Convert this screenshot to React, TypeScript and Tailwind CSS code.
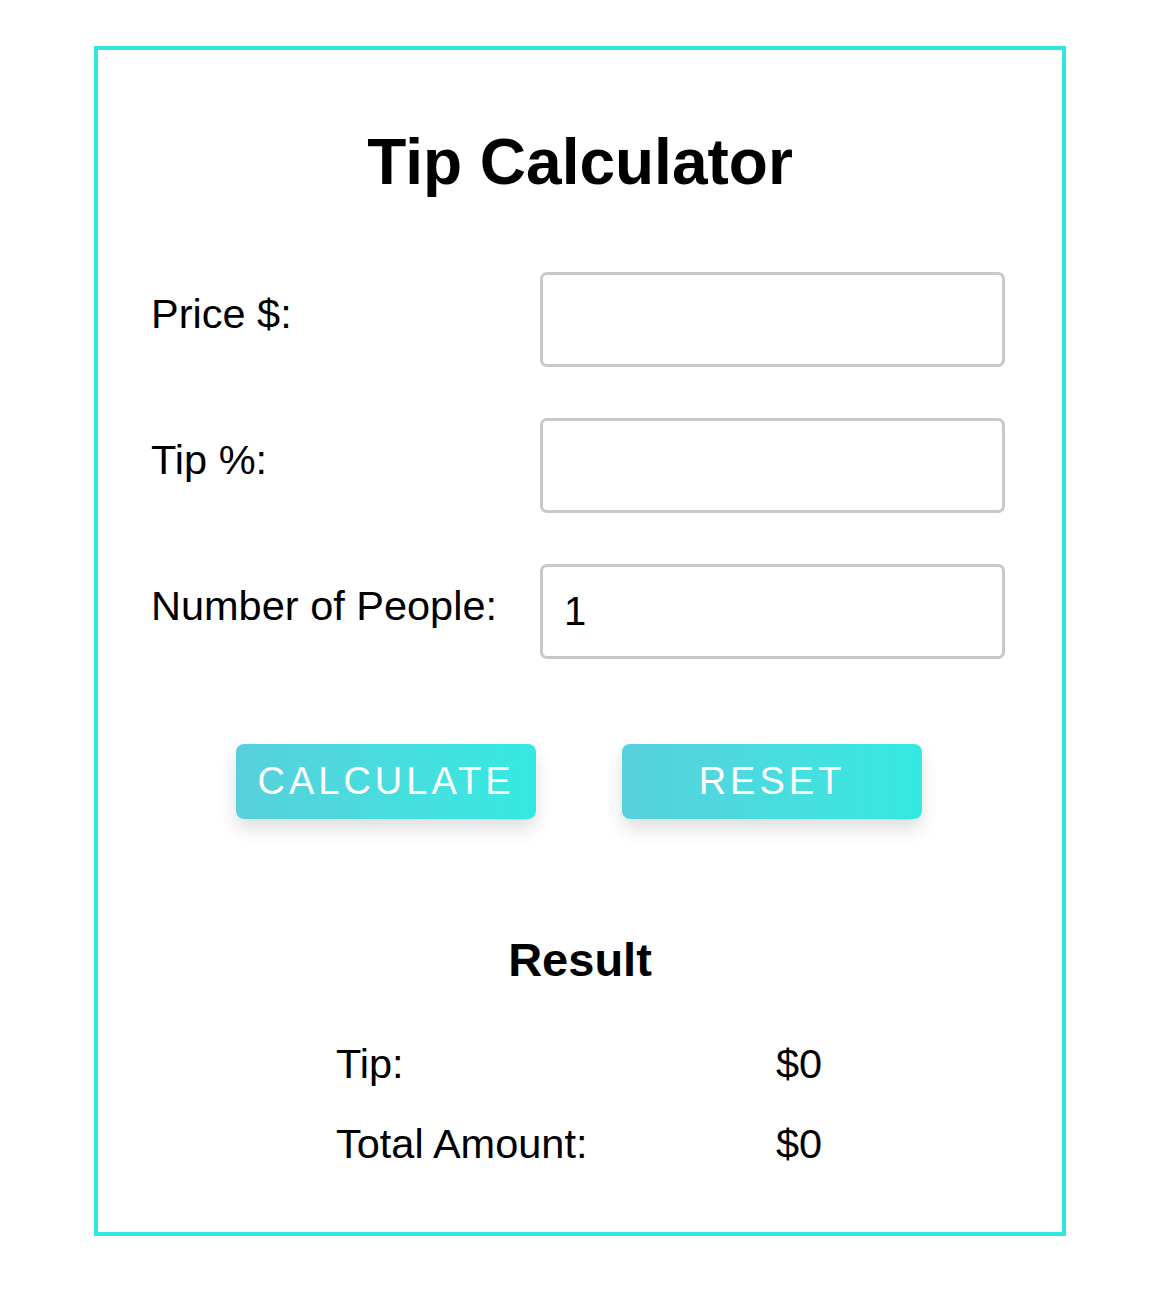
import React, { useState } from 'react';

const App: React.FC = () => {
    const [price, setPrice] = useState('');
    const [tip, setTip] = useState('');
    const [people, setPeople] = useState('1');
    const [result, setResult] = useState({ tip: 0, total: 0 });

    const handleCalculate = () => {
        const p = parseFloat(price) || 0;
        const t = parseFloat(tip) || 0;
        const n = parseInt(people) || 1;
        const tipAmount = (p * t) / 100 / n;
        const total = (p + (p * t) / 100) / n;
        setResult({ tip: +tipAmount.toFixed(2), total: +total.toFixed(2) });
    };

    const handleReset = () => {
        setPrice('');
        setTip('');
        setPeople('1');
        setResult({ tip: 0, total: 0 });
    };

    const fields = [
        { label: 'Price $:', value: price, onChange: setPrice },
        { label: 'Tip %:', value: tip, onChange: setTip },
        { label: 'Number of People:', value: people, onChange: setPeople },
    ];

    return (
        <div className="min-h-screen bg-white pt-[46px] pl-[94px] font-['Liberation_Sans',Arial,sans-serif] text-black">
            <div className="w-[972px] border-4 border-[#30e6df] pt-[80px] pb-[68px]">
                {/* Title */}
                <h1 className="text-center text-[64px] leading-[64px] font-bold">Tip Calculator</h1>

                {/* Form */}
                <div className="mt-[78px] ml-[53px] flex flex-col gap-[51px]">
                    {fields.map(field => (
                        <div key={field.label} className="flex items-start">
                            <label className="w-[389px] mt-[22px] text-[41.5px] leading-[40px]">{field.label}</label>
                            <input
                                type="text"
                                value={field.value}
                                onChange={e => field.onChange(e.target.value)}
                                className="w-[465px] h-[95px] border-[3px] border-[#c8c8c8] rounded-[7px] px-[21px] text-[40px] outline-none"
                            />
                        </div>
                    ))}
                </div>

                {/* Buttons */}
                <div className="mt-[85px] flex justify-center gap-[86px] pr-[2px]">
                    <button
                        onClick={handleCalculate}
                        className="w-[300px] h-[75px] rounded-[8px] bg-gradient-to-r from-[#57d0dc] to-[#33e9e1] text-white text-[38px] tracking-[4px] shadow-[0_10px_18px_rgba(0,0,0,0.13)]"
                    >
                        CALCULATE
                    </button>
                    <button
                        onClick={handleReset}
                        className="w-[300px] h-[75px] rounded-[8px] bg-gradient-to-r from-[#57d0dc] to-[#33e9e1] text-white text-[38px] tracking-[4px] shadow-[0_10px_18px_rgba(0,0,0,0.13)]"
                    >
                        RESET
                    </button>
                </div>

                {/* Result */}
                <h2 className="mt-[118px] text-center text-[47px] leading-[46px] font-bold">Result</h2>
                <div className="mt-[61px] ml-[238px] flex flex-col gap-[40px] text-[41.5px] leading-[40px]">
                    <div className="flex">
                        <span className="w-[440px]">Tip:</span>
                        <span>${result.tip}</span>
                    </div>
                    <div className="flex">
                        <span className="w-[440px]">Total Amount:</span>
                        <span>${result.total}</span>
                    </div>
                </div>
            </div>
        </div>
    );
};

export default App;
